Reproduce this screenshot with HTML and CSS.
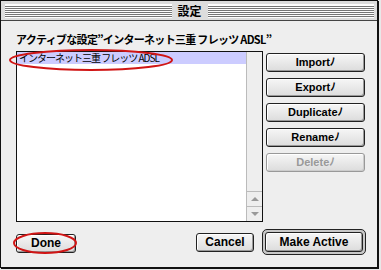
FILE: index.html
```html
<!DOCTYPE html>
<html lang="ja">
<head>
    <meta charset="UTF-8">
    <title>設定</title>
    <link rel="stylesheet" href="styles.css">
</head>
<body>
    <div class="window">
        <div class="titlebar">
            <div class="stripes"></div>
            <span class="title">設定</span>
            <div class="stripes"></div>
        </div>

        <div class="content">
            <p class="label">アクティブな設定”インターネット三重 フレッツ ADSL”</p>

            <div class="main">
                <div class="list">
                    <ul class="items">
                        <li class="selected">インターネット三重 フレッツ ADSL</li>
                    </ul>
                    <div class="scrollbar">
                        <span class="arrow up"></span>
                        <span class="arrow down"></span>
                    </div>
                </div>

                <div class="actions">
                    <button class="btn">Importﾉ</button>
                    <button class="btn">Exportﾉ</button>
                    <button class="btn">Duplicateﾉ</button>
                    <button class="btn">Renameﾉ</button>
                    <button class="btn" disabled>Deleteﾉ</button>
                </div>
            </div>

            <div class="footer">
                <button class="btn done">Done</button>
                <span class="spacer"></span>
                <button class="btn cancel">Cancel</button>
                <div class="default">
                    <button class="btn">Make Active</button>
                </div>
            </div>
        </div>
    </div>

    <!-- 빨간 동그라미 표시 -->
    <svg class="marks" width="381" height="270" viewBox="0 0 381 270">
        <ellipse cx="91" cy="60" rx="81" ry="10" />
        <ellipse cx="45" cy="243" rx="31" ry="10" />
    </svg>
</body>
</html>
```

FILE: styles.css
```css
body {
    margin: 0;
    position: relative;
    width: 381px;
    height: 270px;
    background: #e8e8e8;
    font-family: "Liberation Sans", "Noto Sans CJK JP", sans-serif;
}

.window {
    width: 376px;
    height: 266px;
    border: 1px solid #111;
    box-shadow: 1px 1px 0 #111;
    background: #eeeeee;
    display: flex;
    flex-direction: column;
}

.titlebar {
    height: 20px;
    border-bottom: 1px solid #444;
    background: #dddddd;
    display: flex;
    align-items: center;
    padding: 0 3px 0 4px;
    box-sizing: border-box;
}

.stripes {
    flex: 1;
    height: 13px;
    border-top: 1px solid #fff;
    background: repeating-linear-gradient(#fff 0, #fff 1px, #777 1px, #777 2px);
}

.title {
    padding: 0 6px;
    font: bold 12px/14px "Noto Sans CJK JP", sans-serif;
    color: #000;
}

.content {
    flex: 1;
    padding: 11px 11px 0 15px;
}

.label {
    margin: 0;
    font: bold 11px/14px "Noto Sans CJK JP", sans-serif;
    letter-spacing: -0.7px;
    color: #000;
    white-space: nowrap;
}

.main {
    display: flex;
    margin-top: 5px;
}

.list {
    width: 245px;
    height: 169px;
    border: 1px solid #111;
    background: #fff;
    display: flex;
}

.items {
    flex: 1;
    margin: 0;
    padding: 0;
    list-style: none;
}

.items li {
    height: 12px;
    padding-left: 2px;
    font: 10px/12px "Noto Sans CJK JP", sans-serif;
    letter-spacing: -1px;
    color: #000;
    white-space: nowrap;
}

.items li.selected {
    background: #ccccff;
}

.scrollbar {
    width: 15px;
    border-left: 1px solid #bbb;
    background: #eeeeee;
    display: flex;
    flex-direction: column;
    justify-content: flex-end;
}

.arrow {
    height: 14px;
    border-top: 1px solid #bbb;
    display: flex;
    align-items: center;
    justify-content: center;
}

.arrow::before {
    content: "";
    border-left: 4px solid transparent;
    border-right: 4px solid transparent;
}

.arrow.up::before {
    border-bottom: 4px solid #999;
}

.arrow.down::before {
    border-top: 4px solid #999;
}

.actions {
    margin-left: 3px;
    padding-top: 2px;
    display: flex;
    flex-direction: column;
    gap: 6px;
}

.btn {
    height: 19px;
    padding: 0;
    border: 1px solid #222;
    border-radius: 3px;
    background: linear-gradient(#f6f6f6, #dcdcdc);
    box-shadow: inset 1px 1px 0 #fff, inset -1px -1px 0 #999;
    font: bold 12px/15px "Liberation Sans", "Noto Sans CJK JP", sans-serif;
    color: #000;
}

.actions .btn {
    width: 99px;
    font-size: 11px;
}

.btn:disabled {
    border-color: #999;
    color: #999;
    box-shadow: inset 1px 1px 0 #fff, inset -1px -1px 0 #ccc;
}

.footer {
    margin-top: 7px;
    height: 26px;
    display: flex;
    align-items: center;
}

.done {
    width: 60px;
    margin-top: 3px;
}

.spacer {
    flex: 1;
}

.cancel {
    width: 58px;
    margin-top: 1px;
}

.default {
    margin-left: 8px;
    padding: 2px;
    border: 1px solid #222;
    border-radius: 5px;
    background: #c8c8c8;
    display: flex;
}

.default .btn {
    width: 98px;
    height: 20px;
}

.marks {
    position: absolute;
    left: 0;
    top: 0;
    pointer-events: none;
}

.marks ellipse {
    fill: none;
    stroke: #d01515;
    stroke-width: 2;
}
```
